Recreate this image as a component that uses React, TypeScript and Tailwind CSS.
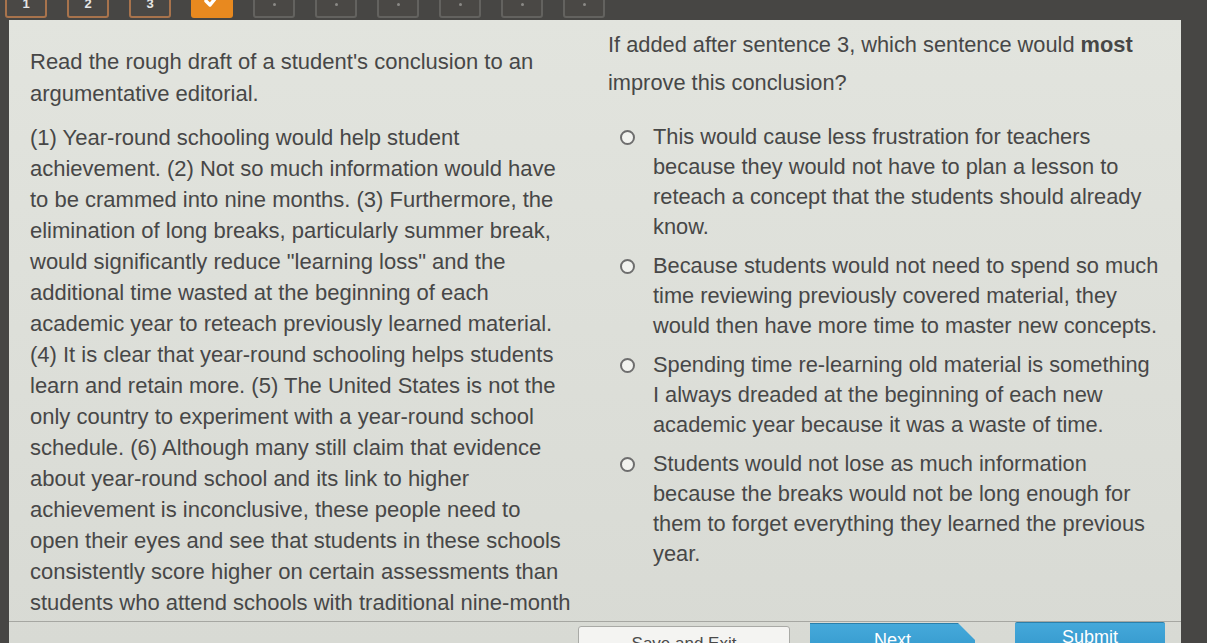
import React from "react";

const leftTitle = [
  "Read the rough draft of a student's conclusion to an",
  "argumentative editorial.",
];

const leftPara = [
  "(1) Year-round schooling would help student",
  "achievement. (2) Not so much information would have",
  "to be crammed into nine months. (3) Furthermore, the",
  "elimination of long breaks, particularly summer break,",
  "would significantly reduce \"learning loss\" and the",
  "additional time wasted at the beginning of each",
  "academic year to reteach previously learned material.",
  "(4) It is clear that year-round schooling helps students",
  "learn and retain more. (5) The United States is not the",
  "only country to experiment with a year-round school",
  "schedule. (6) Although many still claim that evidence",
  "about year-round school and its link to higher",
  "achievement is inconclusive, these people need to",
  "open their eyes and see that students in these schools",
  "consistently score higher on certain assessments than",
  "students who attend schools with traditional nine-month",
  "calendars.",
];

const options = [
  [
    "This would cause less frustration for teachers",
    "because they would not have to plan a lesson to",
    "reteach a concept that the students should already",
    "know.",
  ],
  [
    "Because students would not need to spend so much",
    "time reviewing previously covered material, they",
    "would then have more time to master new concepts.",
  ],
  [
    "Spending time re-learning old material is something",
    "I always dreaded at the beginning of each new",
    "academic year because it was a waste of time.",
  ],
  [
    "Students would not lose as much information",
    "because the breaks would not be long enough for",
    "them to forget everything they learned the previous",
    "year.",
  ],
];

function Tab({ kind, label }: { kind: "done" | "current" | "todo"; label?: string }) {
  if (kind === "done") {
    return (
      <div className="w-[42px] h-[28px] shrink-0 rounded-[3px] border-2 border-[#a8734c] bg-[#4a4845] flex items-center justify-center text-[13px] font-bold text-[#e6e6e6]">
        {label}
      </div>
    );
  }
  if (kind === "current") {
    return (
      <div className="w-[42px] h-[28px] shrink-0 rounded-[3px] bg-[#e8891f] flex items-center justify-center">
        <svg width="16" height="16" viewBox="0 0 16 16" className="-mt-[6px]">
          <path d="M2 8 L6 12 L14 2" stroke="#ffffff" strokeWidth="3.5" fill="none" strokeLinecap="round" strokeLinejoin="round" />
        </svg>
      </div>
    );
  }
  return (
    <div className="w-[42px] h-[28px] shrink-0 rounded-[3px] border-2 border-[#63625f] bg-[#4a4845] flex items-center justify-center">
      <div className="w-[3px] h-[3px] rounded-full bg-[#8a8986]" />
    </div>
  );
}

export default function App() {
  return (
    <div className="w-[1207px] h-[643px] overflow-hidden bg-[#474644] flex flex-col font-['Liberation_Sans',Arial,sans-serif]">
      <div className="h-[20px] shrink-0 flex items-end gap-[20px] pl-[5px] pb-[2px]">
        <Tab kind="done" label="1" />
        <Tab kind="done" label="2" />
        <Tab kind="done" label="3" />
        <Tab kind="current" />
        <Tab kind="todo" />
        <Tab kind="todo" />
        <Tab kind="todo" />
        <Tab kind="todo" />
        <Tab kind="todo" />
        <Tab kind="todo" />
      </div>
      <div className="ml-[9px] w-[1172px] h-[623px] shrink-0 flex flex-col bg-gradient-to-b from-[#e2e4de] to-[#d8dad4]">
        <div className="h-[601px] shrink-0 flex overflow-hidden text-[22px] text-[#474747]">
          <div className="w-[599px] shrink-0 pl-[21px] pt-[26px]">
            <div className="leading-[32px]">
              {leftTitle.map((l, i) => (
                <div key={i} className="whitespace-nowrap">{l}</div>
              ))}
            </div>
            <div className="mt-[12px] leading-[31px]">
              {leftPara.map((l, i) => (
                <div key={i} className="whitespace-nowrap">{l}</div>
              ))}
            </div>
          </div>
          <div className="flex-1 pt-[6px] text-[21.8px]">
            <div className="leading-[38px]">
              <div className="whitespace-nowrap">
                If added after sentence 3, which sentence would <span className="font-bold">most</span>
              </div>
              <div className="whitespace-nowrap">improve this conclusion?</div>
            </div>
            <div className="mt-[20px] flex flex-col gap-[9px] pl-[12px]">
              {options.map((opt, i) => (
                <div key={i} className="flex items-start gap-[18px]">
                  <div className="w-[15px] h-[15px] shrink-0 mt-[8px] rounded-full border-2 border-[#6e6e6e] bg-[#f2f3ef]" />
                  <div className="leading-[30px]">
                    {opt.map((l, j) => (
                      <div key={j} className="whitespace-nowrap">{l}</div>
                    ))}
                  </div>
                </div>
              ))}
            </div>
          </div>
        </div>
        <div className="flex-1 border-t border-[#a6a7a2] flex items-start justify-end pr-[16px] overflow-hidden">
          <div className="mt-[4px] w-[212px] h-[40px] shrink-0 rounded-[3px] border border-[#a9aaa6] bg-[#f4f4f2] flex justify-center pt-[6px] text-[17px] leading-[22px] text-[#4a4a4a]">
            Save and Exit
          </div>
          <div className="ml-[20px] mt-[1px] w-[165px] h-[40px] shrink-0 bg-gradient-to-b from-[#45a9db] to-[#2f94c8] border-t border-[#2a7fab] [clip-path:polygon(0_0,calc(100%-17px)_0,100%_17px,100%_100%,0_100%)] flex justify-center pt-[5px] text-[18px] leading-[22px] text-white">
            Next
          </div>
          <div className="ml-[40px] mt-0 w-[150px] h-[40px] shrink-0 rounded-[2px] bg-gradient-to-b from-[#44a8da] to-[#2f93c7] border-t border-[#2a7fab] flex justify-center pt-[3px] text-[18px] leading-[22px] text-white">
            Submit
          </div>
        </div>
      </div>
    </div>
  );
}
